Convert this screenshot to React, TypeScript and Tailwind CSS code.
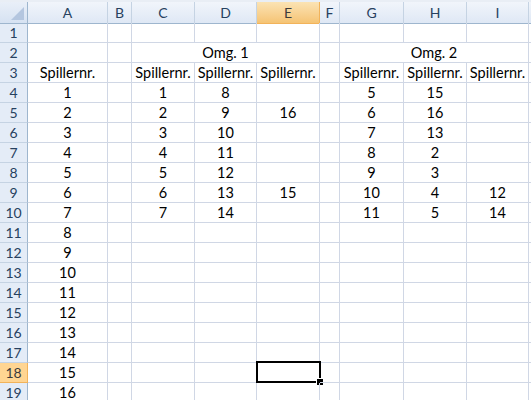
import React from 'react';

// column letters A..I
const cols = ['A', 'B', 'C', 'D', 'E', 'F', 'G', 'H', 'I'];

// cell values per row (index 0 = column A)
const rows: (string | number | null)[][] = [
  [],
  [],
  ['Spillernr.', null, 'Spillernr.', 'Spillernr.', 'Spillernr.', null, 'Spillernr.', 'Spillernr.', 'Spillernr.'],
  [1, null, 1, 8, null, null, 5, 15, null],
  [2, null, 2, 9, 16, null, 6, 16, null],
  [3, null, 3, 10, null, null, 7, 13, null],
  [4, null, 4, 11, null, null, 8, 2, null],
  [5, null, 5, 12, null, null, 9, 3, null],
  [6, null, 6, 13, 15, null, 10, 4, 12],
  [7, null, 7, 14, null, null, 11, 5, 14],
  [8], [9], [10], [11], [12], [13], [14], [15], [16],
];

const gridCols = 'grid grid-cols-[28px_80px_24px_63px_62px_63px_20px_64px_63px_62px_1fr]';

const cell = 'h-5 border-r border-b border-[#d0d7e5] flex items-center justify-center text-black';

const Sheet: React.FC = () => {
  return (
    <div
      className="w-[531px] h-[400px] overflow-hidden bg-white border-t-2 border-[#e9eef5] text-[14.5px]"
      style={{ fontFamily: 'Lato, "Open Sans", sans-serif' }}
    >
      {/* Column headers */}
      <div className={`${gridCols} h-[21px]`}>
        <div className="border-r border-b border-[#9eb6ce] bg-gradient-to-b from-[#e9eff8] to-[#d6e2f2] relative">
          <div className="absolute right-[3px] bottom-[3px] w-0 h-0 border-l-[13px] border-l-transparent border-b-[13px] border-b-[#b4c6df]" />
        </div>
        {cols.map((c) => (
          <div
            key={c}
            className={`border-r border-b flex items-center justify-center text-[14px] ${
              c === 'E'
                ? 'border-[#f2b35a] bg-gradient-to-b from-[#fbe3b4] to-[#f5c474] text-[#3c3c3c]'
                : 'border-[#c5d3e3] border-b-[#9eb6ce] bg-gradient-to-b from-[#f1f5fb] to-[#dfe8f5] text-[#27415f]'
            }`}
          >
            {c}
          </div>
        ))}
        <div className="border-b border-[#9eb6ce] bg-gradient-to-b from-[#f1f5fb] to-[#dfe8f5]" />
      </div>

      {/* Rows */}
      {rows.map((r, i) => {
        const n = i + 1;
        return (
          <div key={n} className={gridCols}>
            <div
              className={`h-5 border-r border-b flex items-center justify-center text-[14px] ${
                n === 18
                  ? 'bg-[#ffd592] border-[#f2b35a] text-[#3c3c3c]'
                  : 'bg-[#e4ecf7] border-[#c5d3e3] border-r-[#9eb6ce] text-[#27415f]'
              }`}
            >
              {n}
            </div>
            {n === 2 ? (
              <>
                <div className={cell} />
                <div className={cell} />
                <div className={`${cell} col-span-3`}>Omg. 1</div>
                <div className={cell} />
                <div className={`${cell} col-span-3`}>Omg. 2</div>
                <div className="h-5 border-b border-[#d0d7e5]" />
              </>
            ) : (
              <>
                {cols.map((c, j) => (
                  <div key={c} className={`${cell} relative`}>
                    {r[j] ?? ''}
                    {n === 18 && c === 'E' && (
                      <div className="absolute -left-px -top-[2px] w-[65px] h-[22px] border-2 border-black">
                        <div className="absolute -right-[4px] -bottom-[4px] w-[7px] h-[7px] bg-black border-l border-t border-white" />
                      </div>
                    )}
                  </div>
                ))}
                <div className="h-5 border-b border-[#d0d7e5]" />
              </>
            )}
          </div>
        );
      })}
    </div>
  );
};

export default function App() {
  return <Sheet />;
}
